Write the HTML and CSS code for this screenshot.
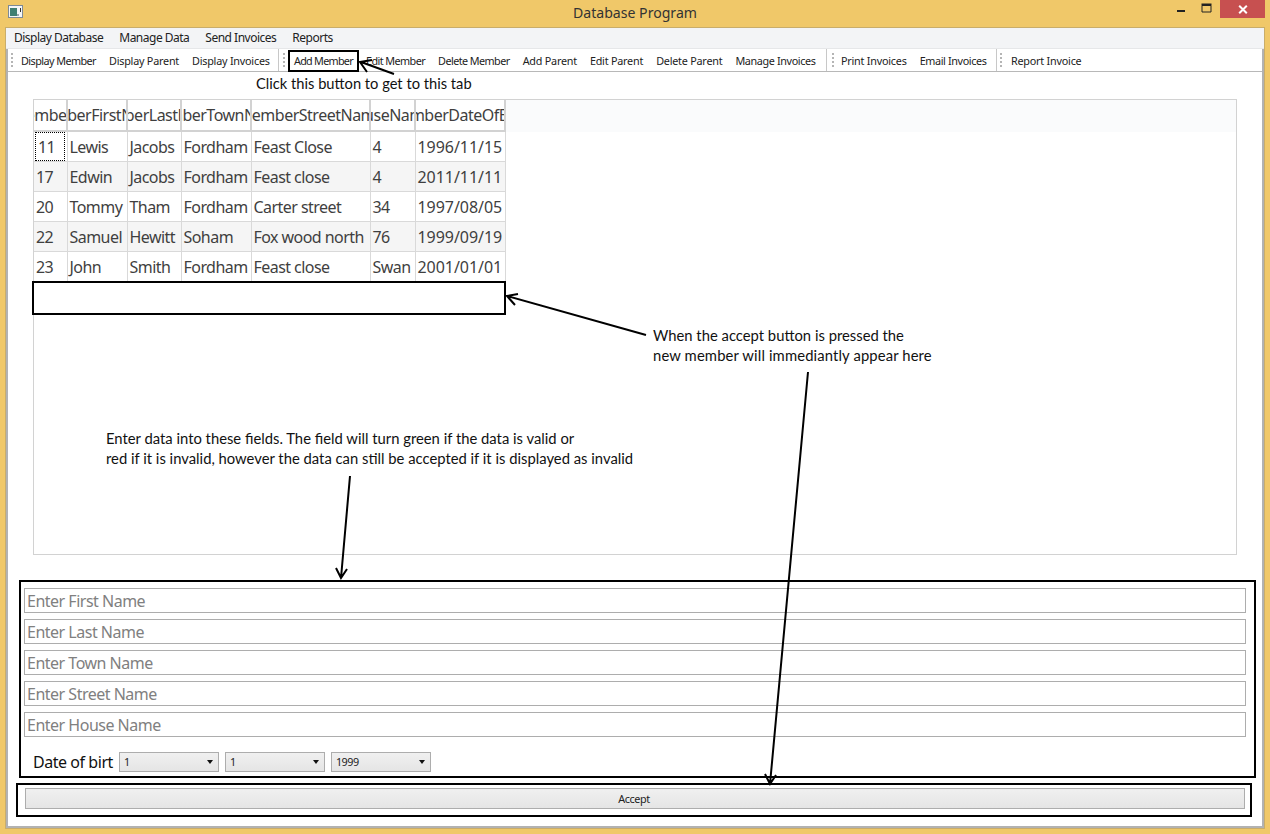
FILE: index.html
```html
<!DOCTYPE html>
<html lang="en">
<head>
<meta charset="utf-8">
<title>Database Program</title>
<link rel="stylesheet" href="styles.css">
</head>
<body>
<div class="window">
  <header class="titlebar">
    <svg class="app-icon" width="16" height="14" viewBox="0 0 16 14"><rect x="0.5" y="0.5" width="14" height="12" fill="#f4f6f8" stroke="#7d8a96"/><rect x="2" y="3" width="7" height="8" fill="#3f7f72"/><rect x="9" y="9" width="2" height="2" fill="#9aa5ad"/><rect x="12" y="3" width="1" height="4" fill="#333"/></svg>
    <div class="title">Database Program</div>
    <div class="controls">
      <button class="ctl ctl-min" aria-label="Minimise"><svg width="10" height="4" viewBox="0 0 10 4"><rect width="8" height="2" y="1" x="1" fill="#222"/></svg></button>
      <button class="ctl ctl-max" aria-label="Maximise"><svg width="12" height="10" viewBox="0 0 12 10"><path d="M1 2.5h9V9H1z" fill="none" stroke="#222"/><rect x="0.5" y="0.5" width="10" height="2" fill="#222"/></svg></button>
      <button class="ctl ctl-close" aria-label="Close"><svg width="10" height="9" viewBox="0 0 10 9"><path d="M1.2 0.7 8.8 8.3M8.8 0.7 1.2 8.3" stroke="#fff" stroke-width="2" fill="none"/></svg></button>
    </div>
  </header>

  <div class="client">
    <nav class="menubar">
      <span class="menu-item">Display Database</span>
      <span class="menu-item">Manage Data</span>
      <span class="menu-item">Send Invoices</span>
      <span class="menu-item">Reports</span>
    </nav>

    <div class="panel">
      <div class="toolbar">
        <div class="tool-group tg-display">
          <span class="grip"></span>
          <span class="tool tool-member">Display Member</span>
          <span class="tool">Display Parent</span>
          <span class="tool">Display Invoices</span>
        </div>
        <div class="tool-group tg-manage">
          <span class="grip"></span>
          <span class="tool tool-marked">Add Member</span>
          <span class="tool tool-member">Edit Member</span>
          <span class="tool tool-member">Delete Member</span>
          <span class="tool">Add Parent</span>
          <span class="tool">Edit Parent</span>
          <span class="tool">Delete Parent</span>
          <span class="tool tool-snug">Manage Invoices</span>
        </div>
        <div class="tool-group tg-send">
          <span class="grip"></span>
          <span class="tool">Print Invoices</span>
          <span class="tool tool-snug">Email Invoices</span>
        </div>
        <div class="tool-group tg-report">
          <span class="grip"></span>
          <span class="tool">Report Invoice</span>
        </div>
      </div>

      <main class="content">
        <section class="table-frame">
          <table class="members">
            <colgroup>
              <col class="c1"><col class="c2"><col class="c3"><col class="c4"><col class="c5"><col class="c6"><col class="c7">
            </colgroup>
            <thead>
              <tr>
                <th><div class="head">memberID</div></th>
                <th><div class="head">memberFirstName</div></th>
                <th><div class="head">memberLastName</div></th>
                <th><div class="head">memberTownName</div></th>
                <th><div class="head">memberStreetName</div></th>
                <th><div class="head">houseNames</div></th>
                <th><div class="head">memberDateOfBirth</div></th>
              </tr>
            </thead>
            <tbody>
              <tr><td class="focus-cell"><span class="focus-mark">11</span></td><td>Lewis</td><td>Jacobs</td><td>Fordham</td><td>Feast Close</td><td>4</td><td>1996/11/15</td></tr>
              <tr class="alt"><td>17</td><td>Edwin</td><td>Jacobs</td><td>Fordham</td><td>Feast close</td><td>4</td><td>2011/11/11</td></tr>
              <tr><td>20</td><td>Tommy</td><td>Tham</td><td>Fordham</td><td>Carter street</td><td>34</td><td>1997/08/05</td></tr>
              <tr class="alt"><td>22</td><td>Samuel</td><td>Hewitt</td><td>Soham</td><td>Fox wood north</td><td>76</td><td>1999/09/19</td></tr>
              <tr><td>23</td><td>John</td><td>Smith</td><td>Fordham</td><td>Feast close</td><td>Swan</td><td>2001/01/01</td></tr>
            </tbody>
          </table>
          <div class="new-row"></div>
        </section>

        <form class="entry-form">
          <input class="field" placeholder="Enter First Name">
          <input class="field" placeholder="Enter Last Name">
          <input class="field" placeholder="Enter Town Name">
          <input class="field" placeholder="Enter Street Name">
          <input class="field" placeholder="Enter House Name">
          <div class="dob">
            <span class="dob-label">Date of birt</span>
            <span class="combo">1</span>
            <span class="combo">1</span>
            <span class="combo">1999</span>
          </div>
        </form>

        <div class="accept-box">
          <button class="accept" type="button">Accept</button>
        </div>
      </main>
    </div>
  </div>

  <svg class="arrows" width="1270" height="834" viewBox="0 0 1270 834">
    <g fill="none" stroke="#000" stroke-width="2">
      <path d="M394 74 361 62M372 60 360 62 367 72"/>
      <path d="M646 335 507 296M518 294 507 296 515 305"/>
      <path d="M350 476 341 578M336 568 341 578 347 569"/>
      <path d="M808 372 770 784M765 774 770 784 776 775"/>
    </g>
  </svg>
  <p class="note note-tab">Click this button to get to this tab</p>
  <p class="note note-row">When the accept button is pressed the<br><span class="note-wide">new member will immediantly appear here</span></p>
  <p class="note note-fields">Enter data into these fields. The field will turn green if the data is valid or<br>red if it is invalid, however the data can still be accepted if it is displayed as invalid</p>
</div>
</body>
</html>
```
FILE: styles.css
```css
* { box-sizing: border-box; }
html, body { margin: 0; padding: 0; }
body { font-family: "Noto Sans", "Open Sans", sans-serif; }

.window {
  position: relative;
  width: 1270px;
  height: 834px;
  background: #f0c869;
  display: flex;
  flex-direction: column;
  overflow: hidden;
}

/* title bar */
.titlebar {
  position: relative;
  height: 27px;
  flex: none;
  display: flex;
  align-items: flex-start;
}
.app-icon { margin: 5px 0 0 8px; }
.title {
  position: absolute;
  left: 0;
  right: 0;
  top: 4px;
  text-align: center;
  font-size: 14.1px;
  line-height: 18px;
  color: #333;
}
.controls { margin-left: auto; margin-right: 5px; display: flex; position: relative; }
.ctl {
  border: 0;
  padding: 0;
  background: transparent;
  height: 18px;
  display: flex;
  align-items: center;
  justify-content: center;
}
.ctl-min { width: 26px; padding-top: 4px; }
.ctl-max { width: 26px; padding-bottom: 3px; }
.ctl-close { width: 45px; background: #c75050; }

/* client */
.client {
  flex: 1;
  margin: 0 5px 5px 5px;
  border: 1px solid #c9ad6a;
  background: #fff;
  display: flex;
  flex-direction: column;
  min-height: 0;
}

.menubar {
  height: 21px;
  flex: none;
  background: #f3f4f6;
  border-bottom: 1px solid #e6e7e9;
  display: flex;
  align-items: center;
  padding: 0 0 2px 8px;
  font-size: 12px;
  letter-spacing: -0.5px;
  color: #222;
}
.menu-item { margin-right: 16px; white-space: nowrap; }

.panel {
  flex: 1;
  min-height: 0;
  display: flex;
  flex-direction: column;
  border: 2px solid #b2b2b2;
  border-top: 0;
}

.toolbar {
  height: 23px;
  flex: none;
  display: flex;
  border-bottom: 1px solid #b8b8b8;
  font-size: 10.8px;
  letter-spacing: -0.22px;
  color: #222;
}
.tool-group {
  display: flex;
  align-items: center;
  height: 22px;
  border-right: 1px solid #c8c8c8;
  flex: none;
}
.tg-display { width: 271px; padding-left: 3px; }
.tg-manage { width: 548px; padding-left: 4px; }
.tg-send { width: 170px; padding-left: 5px; }
.tg-report { border-right: 0; padding-left: 3px; }
.grip {
  flex: none;
  width: 2px;
  height: 15px;
  margin-right: 8px;
  background: repeating-linear-gradient(to bottom, #b5b5b5 0 2px, transparent 2px 4px);
}
.tg-manage .grip, .tg-report .grip { margin-right: 9px; }
.tg-send .grip { margin-right: 7px; }
.tool { flex: none; margin-right: 13px; white-space: nowrap; line-height: 21px; padding-top: 1px; }
.tool-member { letter-spacing: -0.56px; }
.tool-snug { letter-spacing: -0.37px; }
.tool-marked {
  margin: 1px 7px -1px -6px;
  padding: 0 4px;
  height: 22px;
  border: 2px solid #000;
  line-height: 18px;
  letter-spacing: -0.72px;
}

/* table */
.content {
  flex: 1;
  position: relative;
  padding: 27px 0 0 0;
  display: flex;
  flex-direction: column;
  min-height: 0;
}
.table-frame {
  height: 456px;
  margin: 0 25px;
  border: 1px solid #d2d2d2;
  background:
    linear-gradient(#fafbfc, #fafbfc) top / 100% 32px no-repeat,
    #fff;
  flex: none;
}
.members {
  width: 471px;
  table-layout: fixed;
  border-collapse: collapse;
  font-size: 16px;
  color: #3f3f3f;
}
.c1 { width: 33px; }
.c2 { width: 60px; }
.c3 { width: 54px; }
.c4 { width: 70px; }
.c5 { width: 119px; }
.c6 { width: 45px; }
.c7 { width: 90px; }
.members th {
  height: 31px;
  padding: 0;
  border: 1px solid #d2d2d2;
  border-width: 0 2px 2px 0;
  font-weight: 400;
  background: #fff;
}
.head {
  display: flex;
  justify-content: center;
  overflow: hidden;
  white-space: nowrap;
  letter-spacing: -0.5px;
  line-height: 29px;
}
.members td {
  height: 30px;
  padding: 2px 0 0 2px;
  border: 1px solid #d9d9d9;
  border-width: 0 1px 1px 0;
  white-space: nowrap;
  overflow: hidden;
  letter-spacing: -0.55px;
}
.members td:last-child { letter-spacing: -0.05px; }
.members .alt td { background: #f5f5f5; }
.focus-cell { position: relative; }
.focus-mark {
  position: absolute;
  left: 1px;
  top: 0;
  width: 30px;
  height: 29px;
  padding-left: 2px;
  line-height: 29px;
  border: 1px dotted #000;
}
.new-row {
  width: 474px;
  height: 34px;
  margin: -1px 0 0 -2px;
  border: 2px solid #000;
  position: relative;
}

/* form */
.entry-form {
  flex: none;
  height: 198px;
  margin: 25px 6px 0 11px;
  border: 2px solid #000;
  padding: 6px 8px 0 3px;
  display: flex;
  flex-direction: column;
  gap: 6px;
}
.field {
  display: block;
  width: 100%;
  height: 25px;
  flex: none;
  border: 1px solid #adadad;
  padding: 0 2px;
  font: 16px/23px "Noto Sans", sans-serif;
  letter-spacing: -0.5px;
  outline: 0;
}
.field::placeholder { color: #808080; opacity: 1; }
.dob {
  display: flex;
  align-items: center;
  height: 21px;
  margin-top: 8px;
  padding-left: 9px;
}
.dob-label {
  font-size: 16px;
  letter-spacing: -0.45px;
  color: #111;
  margin-right: 6px;
  white-space: nowrap;
}
.combo {
  position: relative;
  flex: none;
  width: 100px;
  height: 20px;
  margin-right: 6px;
  border: 1px solid #adadad;
  background: linear-gradient(#f0f0f0, #e5e5e5);
  font-size: 10.8px;
  letter-spacing: -0.5px;
  line-height: 18px;
  padding-left: 4px;
  color: #222;
}
.combo::after {
  content: "";
  position: absolute;
  right: 5px;
  top: 7px;
  border-style: solid;
  border-color: #111 transparent transparent;
  border-width: 4px 3.5px 0;
}

.accept-box {
  flex: none;
  height: 34px;
  margin: 5px 10px 0 8px;
  border: 2px solid #000;
  padding: 3px 5px 0 7px;
}
.accept {
  display: block;
  width: 100%;
  height: 21px;
  border: 1px solid #adadad;
  background: linear-gradient(#f0f0f0, #e5e5e5);
  font: 10.8px/19px "Noto Sans", sans-serif;
  letter-spacing: -0.4px;
  color: #222;
  padding: 0 2px 0 0;
}

/* annotations */
.arrows { position: absolute; left: 0; top: 0; pointer-events: none; }
.note {
  position: absolute;
  margin: 0;
  font-family: Lato, sans-serif;
  font-size: 14.8px;
  line-height: 20px;
  color: #111;
  white-space: nowrap;
}
.note-tab { left: 256px; top: 73px; font-size: 14.7px; }
.note-row { left: 653px; top: 325px; }
.note-wide { letter-spacing: 0.13px; }
.note-fields { left: 106px; top: 428px; }
```
